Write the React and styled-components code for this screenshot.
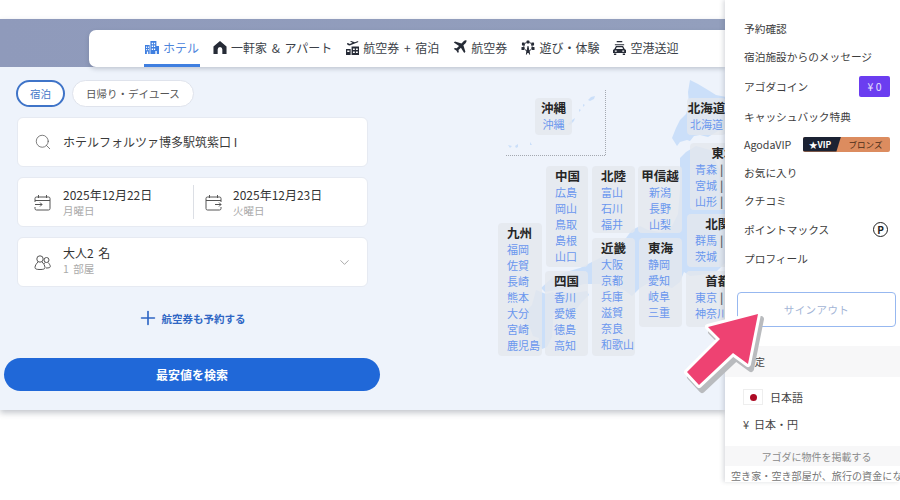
import styled, { createGlobalStyle } from "styled-components";
import { Search, ChevronDown, Plus } from "lucide-react";

const GlobalStyle = createGlobalStyle`
  html, body { margin: 0; padding: 0; background: #fff; }
  body { font-family: "Noto Sans CJK JP", "Noto Sans", sans-serif; }
  * { box-sizing: border-box; }
`;

const Page = styled.div`
  position: relative;
  width: 900px;
  height: 500px;
  overflow: hidden;
  display: flex;
  align-items: flex-start;
`;

const Main = styled.main`
  width: 725px;
  height: 391px;
  margin-top: 19px;
  background: #eef3fb;
  box-shadow: 0 3px 6px rgba(60, 70, 90, 0.3);
  display: flex;
  flex-direction: column;
`;

const Band = styled.div`
  height: 48px;
  padding: 11px 0 0 89px;
  background: linear-gradient(90deg, #8f9abb, #939fbd);
`;

const TabCard = styled.nav`
  height: 37px;
  padding-left: 55px;
  display: flex;
  gap: 12px;
  background: #fff;
  border-radius: 7px 0 0 7px;
  box-shadow: 0 2px 4px rgba(60, 70, 90, 0.25);
`;

const Tab = styled.div`
  height: 37px;
  padding: 0 1px;
  display: flex;
  align-items: center;
  gap: 4px;
  font-size: 12px;
  word-spacing: 2px;
  white-space: nowrap;
  color: ${(p) => (p.$active ? "#4f86dc" : "#3b3f48")};
  border-bottom: 3px solid ${(p) => (p.$active ? "#3f7fe0" : "transparent")};
  svg { flex: none; }
`;

const Content = styled.div`
  flex: 1;
  display: flex;
`;

const FormColumn = styled.div`
  width: 385px;
  padding: 13px 0 0 4px;
  display: flex;
  flex-direction: column;
`;

const PillRow = styled.div`
  margin-left: 12px;
  display: flex;
  gap: 7px;
`;

const Pill = styled.div`
  width: ${(p) => (p.$active ? 49 : 122)}px;
  height: 27px;
  display: flex;
  align-items: center;
  justify-content: center;
  font-size: 10.5px;
  border-radius: 14px;
  background: #fff;
  color: ${(p) => (p.$active ? "#4478c8" : "#555")};
  border: ${(p) => (p.$active ? "2px solid #3f74c8" : "1px solid #dfe3ec")};
`;

const Field = styled.div`
  width: 351px;
  height: 50px;
  margin: 10px 0 0 13px;
  display: flex;
  align-items: center;
  background: #fff;
  border: 1px solid #e6eaf2;
  border-radius: 6px;
  color: #444;
`;

const FieldIcon = styled.div`
  width: ${(p) => (p.$second ? 39 : 45)}px;
  padding-left: ${(p) => (p.$second ? 11 : 16)}px;
  display: flex;
  flex: none;
  color: #555;
`;

const DatePart = styled.div`
  flex: ${(p) => (p.$first ? "0 0 176px" : "1")};
  height: 34px;
  display: flex;
  align-items: center;
  border-right: ${(p) => (p.$first ? "1px solid #dcdfe5" : "none")};
`;

const SearchText = styled.div`
  padding-bottom: 2px;
  font-size: 12px;
  color: #3a3a3a;
`;

const Stack = styled.div`
  display: flex;
  flex-direction: column;
  flex: 1;
  padding-bottom: ${(p) => (p.$lift ? 3 : 0)}px;
  word-spacing: 2px;
`;

const MainLine = styled.div`
  font-size: 12px;
  line-height: 16px;
  color: #333;
`;

const SubLine = styled.div`
  font-size: 10.5px;
  line-height: 15px;
  color: #aaa;
`;

const Chevron = styled.div`
  width: 30px;
  display: flex;
  color: #777;
`;

const AddFlight = styled.div`
  margin-top: 20px;
  width: 374px;
  height: 22px;
  display: flex;
  justify-content: center;
  align-items: center;
  gap: 3px;
  font-size: 10.5px;
  font-weight: 700;
  color: #2f66c4;
`;

const SearchButton = styled.div`
  width: 376px;
  height: 33px;
  margin-top: 29px;
  display: flex;
  align-items: center;
  justify-content: center;
  border-radius: 17px;
  background: #2068d8;
  color: #fff;
  font-size: 12px;
  font-weight: 700;
`;

const MapCanvas = styled.div`
  position: relative;
  flex: 1;
  overflow: hidden;
`;

const MapShape = styled.svg`
  position: absolute;
  left: 0;
  top: 0;
`;

const Region = styled.div`
  position: absolute;
  left: ${(p) => p.$x - 385}px;
  top: ${(p) => p.$y - 67}px;
  width: ${(p) => p.$w}px;
  height: ${(p) => p.$h}px;
  padding: 2px 0 0 ${(p) => (p.$left ? 9 : 0)}px;
  text-align: ${(p) => (p.$left ? "left" : "center")};
  background: rgba(228, 231, 237, 0.8);
  border-radius: 4px;
  white-space: nowrap;
`;

const RegionTitle = styled.div`
  font-size: 12.5px;
  line-height: 16px;
  font-weight: 700;
  color: #262626;
`;

const RegionItem = styled.div`
  padding-left: ${(p) => p.$inset || 0}px;
  text-align: ${(p) => (p.$inset ? "left" : "inherit")};
  font-size: 11px;
  line-height: 16px;
  color: #6a97ee;
`;

const Pipe = styled.span`
  margin-left: 3px;
  color: #5d6068;
  font-weight: 700;
`;

const Drawer = styled.aside`
  position: relative;
  z-index: 2;
  width: 175px;
  height: 482px;
  padding-top: 14px;
  background: #fff;
  box-shadow: -2px 0 4px rgba(60, 70, 90, 0.18);
  overflow: hidden;
`;

const MenuRow = styled.div`
  height: ${(p) => p.$h || 28}px;
  padding: 0 10px 0 19px;
  display: flex;
  align-items: center;
  justify-content: space-between;
  font-size: 10.7px;
  color: #3d3d3d;
  white-space: nowrap;
`;

const CoinBadge = styled.div`
  width: 31px;
  height: 21px;
  display: flex;
  align-items: center;
  justify-content: center;
  background: #6b3df0;
  color: #e6e0ff;
  font-size: 10.5px;
  border-radius: 2px;
`;

const VipBadge = styled.div`
  width: 87px;
  height: 15px;
  display: flex;
  font-size: 8.5px;
  background: #dc8c5f;
  border-radius: 2px;
  overflow: hidden;
`;

const VipDark = styled.div`
  width: 38px;
  padding-left: 6px;
  display: flex;
  align-items: center;
  color: #fff;
  font-weight: 700;
  background: #1b2233;
  clip-path: polygon(0 0, 100% 0, 88% 100%, 0 100%);
`;

const VipLight = styled.div`
  flex: 1;
  display: flex;
  align-items: center;
  justify-content: center;
  color: #4a2c18;
`;

const PointBadge = styled.div`
  width: 15px;
  height: 15px;
  margin-right: 2px;
  display: flex;
  align-items: center;
  justify-content: center;
  border: 1.5px solid #222;
  border-radius: 50%;
  font-size: 10px;
  font-weight: 700;
  color: #222;
`;

const SignOut = styled.div`
  width: 159px;
  height: 35px;
  margin: 20px 0 0 12px;
  display: flex;
  align-items: center;
  justify-content: center;
  font-size: 10.5px;
  letter-spacing: 0.4px;
  color: #a3b5d6;
  background: #fff;
  border: 1px solid #97b8f0;
  border-radius: 4px;
`;

const SettingBand = styled.div`
  height: 31px;
  margin-top: 19px;
  padding-left: 19px;
  display: flex;
  align-items: center;
  font-size: 10.5px;
  color: #444;
  background: #f7f7f8;
`;

const LangRow = styled.div`
  height: 20px;
  margin-top: ${(p) => p.$mt}px;
  padding-left: 18px;
  display: flex;
  align-items: center;
  gap: ${(p) => p.$gap}px;
  font-size: 11px;
  color: #444;
`;

const Flag = styled.div`
  width: 20px;
  height: 16px;
  display: flex;
  align-items: center;
  justify-content: center;
  border: 1px solid #eee;
  &::after {
    content: "";
    width: 7px;
    height: 7px;
    border-radius: 50%;
    background: #ad0a24;
  }
`;

const ListBand = styled.div`
  height: 20px;
  margin-top: 12px;
  padding-left: 8px;
  display: flex;
  align-items: center;
  justify-content: center;
  font-size: 10px;
  color: #8a8a8a;
  background: #f7f7f8;
`;

const ListNote = styled.div`
  padding: 2px 0 0 6px;
  line-height: 16px;
  font-size: 10px;
  letter-spacing: 0.1px;
  color: #777;
  white-space: nowrap;
`;

const ArrowOverlay = styled.svg`
  position: absolute;
  z-index: 3;
  left: 670px;
  top: 300px;
`;

const HotelIcon = () => (
  <svg width="14" height="15" viewBox="0 0 15 15" fill="#3f7fe0" preserveAspectRatio="none">
    <path d="M0 5h5v9H3.400v-2.400H2V14H0zM1.200 6.600v1.300h1V6.600zm1.900 0v1.300h1V6.600zM1.200 8.900v1.300h1V8.900zm1.900 0v1.300h1V8.900z" fillRule="evenodd" />
    <path d="M5.800 1h6.400v5H15v8h-2.400v-3h-1.500v3H5.800zm1.400 1.700v1.500h1.400V2.700zm2.300 0v1.500h1.400V2.700zM7.200 5.600v1.500h1.400V5.600zm2.300 0v1.500h1.400V5.600zM7.200 8.500V10h1.400V8.500zm2.300 0V10h1.400V8.500z" fillRule="evenodd" />
  </svg>
);

const HomeIcon = () => (
  <svg width="14" height="15" viewBox="0 0 15 15" fill="#262b36" preserveAspectRatio="none">
    <path d="M7.500 1 14.500 6.600V14H10V9.500a2.500 2.500 0 0 0-5 0V14H.5V6.600z" />
  </svg>
);

const PlaneHotelIcon = () => (
  <svg width="13" height="15" viewBox="0 0 14 15" fill="#262b36" preserveAspectRatio="none">
    <path d="M1 3.400 2 3l2.200 1L7 2.800 4.400 1.400 5.400 1l4.200 1.200 2.600-1c.8-.3 1.600.4.6 1L4 5.600 1.800 5z" />
    <path d="M0 9h5v6H0zM6 6.500h8V15H6zM1.300 10.500v1.400h2.400v-1.400zM7.500 8.500v1.500h2V8.500zM10.700 8.500v1.500h2V8.500zM7.500 11.500V13h2v-1.500zM10.700 11.500V13h2v-1.500z" fillRule="evenodd" />
  </svg>
);

const PlaneIcon = () => (
  <svg width="14" height="14" viewBox="0 0 14 14" fill="#262b36">
    <path d="M13.600.6c-.7-.7-2-.3-3 .7L8.500 3.400 2 1.400.8 2.600l5.200 3.300-2.300 2.400-1.900-.3-.9.900 2.400 1.600 1.600 2.400.9-.9-.3-1.900 2.400-2.300 3.300 5.200 1.200-1.200-2-6.500 2.100-2.100c1-1 1.400-2.300.7-3z" />
  </svg>
);

const WheelIcon = () => (
  <svg width="14" height="15" viewBox="0 0 15 15" fill="#262b36" preserveAspectRatio="none">
    <path d="M7 6h1l1.800 8.500H8.600L7.500 9.500 6.400 14.500H5.200z" />
    <rect x="6" y="0.500" width="3" height="3" rx="0.600" />
    <rect x="6" y="10" width="3" height="3" rx="0.600" />
    <rect x="1" y="2.500" width="3" height="3" rx="0.600" />
    <rect x="11" y="2.500" width="3" height="3" rx="0.600" />
    <rect x="0.500" y="7" width="3" height="3" rx="0.600" />
    <rect x="11.500" y="7" width="3" height="3" rx="0.600" />
    <circle cx="7.500" cy="6.500" r="4.500" fill="none" stroke="#262b36" strokeWidth="0.900" />
  </svg>
);

const CarIcon = () => (
  <svg width="13" height="15" viewBox="0 0 14 15" fill="#262b36" preserveAspectRatio="none">
    <path d="M4 1h6v1.200H4zM2 4.200h10V5.300H2z" />
    <path d="M3.200 6h7.600L12.500 9 14 10v3H0v-3l1.500-1zM4 7.200 3.200 9h7.600L10 7.200zM2 10.500v1.200h2v-1.200zm8 0v1.200h2v-1.200z" fillRule="evenodd" />
    <path d="M1 13.500h2.500V15H1zM10.500 13.500H13V15h-2.500z" />
  </svg>
);

const CheckInIcon = () => (
  <svg width="17" height="17" viewBox="0 0 17 17" fill="none" stroke="#555" strokeWidth="1">
    <path d="M1 8V4.500a1.500 1.500 0 0 1 1.500-1.500h12A1.500 1.500 0 0 1 16 4.500v10a1.500 1.500 0 0 1-1.500 1.500h-12A1.500 1.500 0 0 1 1 14.500V13" />
    <path d="M4.500 1v3M12.500 1v3M1 6.500h15M1 10.500h7M6 8.500l2 2-2 2" />
  </svg>
);

const CheckOutIcon = () => (
  <svg width="17" height="17" viewBox="0 0 17 17" fill="none" stroke="#555" strokeWidth="1">
    <path d="M16 8V4.500A1.500 1.500 0 0 0 14.500 3h-12A1.500 1.500 0 0 0 1 4.500v10A1.500 1.500 0 0 0 2.500 16h12a1.500 1.500 0 0 0 1.500-1.500V13" />
    <path d="M4.500 1v3M12.500 1v3M1 6.500h15M10 10.500h6M14 8.500l2 2-2 2" />
  </svg>
);

const GuestsIcon = () => (
  <svg width="17" height="17" viewBox="0 0 17 17" fill="none" stroke="#555" strokeWidth="1">
    <circle cx="6" cy="5" r="3.200" />
    <circle cx="12.500" cy="6" r="2.500" />
    <path d="M4 8C2.500 9.500 1 11.500 1 13.500c0 1.500 1.500 2 5 2s5-.5 5-2c0-2-1.500-4-3-5.500" />
    <path d="M11 8.500c-.5.5-.8 1-1 1.500M14 8.500c1 1 2.300 2.500 2.300 4 0 1-1 1.500-4.300 1.500" />
  </svg>
);

const tabs = [
  { label: "ホテル", icon: <HotelIcon />, active: true },
  { label: "一軒家 & アパート", icon: <HomeIcon /> },
  { label: "航空券 + 宿泊", icon: <PlaneHotelIcon /> },
  { label: "航空券", icon: <PlaneIcon /> },
  { label: "遊び・体験", icon: <WheelIcon /> },
  { label: "空港送迎", icon: <CarIcon /> },
];

// coordinates are page pixels, the drawer covers what runs past x=725
const regions = [
  { title: "沖縄", x: 535, y: 98, w: 37, h: 37, items: ["沖縄"] },
  { title: "北海道", x: 687, y: 98, w: 39, h: 37, items: ["北海道"] },
  { title: "東北", x: 690, y: 143, w: 68, h: 67, inset: 5, items: ["青森|", "宮城|", "山形|"] },
  { title: "中国", x: 546, y: 166, w: 42, h: 101, left: true, items: ["広島", "岡山", "鳥取", "島根", "山口"] },
  { title: "北陸", x: 592, y: 166, w: 43, h: 67, left: true, items: ["富山", "石川", "福井"] },
  { title: "甲信越", x: 638, y: 166, w: 44, h: 67, items: ["新潟", "長野", "山梨"] },
  { title: "北関東", x: 687, y: 214, w: 74, h: 53, inset: 8, items: ["群馬|", "茨城"] },
  { title: "九州", x: 498, y: 223, w: 44, h: 133, left: true, items: ["福岡", "佐賀", "長崎", "熊本", "大分", "宮崎", "鹿児島"] },
  { title: "近畿", x: 592, y: 238, w: 43, h: 118, left: true, items: ["大阪", "京都", "兵庫", "滋賀", "奈良", "和歌山"] },
  { title: "東海", x: 639, y: 238, w: 43, h: 89, left: true, items: ["静岡", "愛知", "岐阜", "三重"] },
  { title: "四国", x: 545, y: 271, w: 43, h: 85, left: true, items: ["香川", "愛媛", "徳島", "高知"] },
  { title: "首都圏", x: 686, y: 271, w: 76, h: 56, inset: 9, items: ["東京|", "神奈川"] },
];

const japan = [
  "M690 80L698 84 708 90 716 95 726 97V128L718 131 708 137 700 135 694 136 690 141 687 140 680 142 677 146 672 138 676 128 680 120 686 114 689 104 688 92Z",
  "M680 158L686 152 696 146 710 150 720 170 726 190V262L716 272 700 275 690 276 684 272 680 282 672 288 660 284 650 282 640 288 632 296 624 290 612 286 600 284 584 284 570 288 556 290 545 292 541 288 552 278 566 272 580 268 592 262 604 256 616 246 626 238 632 230 640 226 648 230 660 232 672 226 678 214 680 190Z",
  "M553 295L562 292 574 293 587 291 589 295 581 303 575 311 572 316 567 310 559 310 551 314Z",
  "M536 290L546 294 553 292 556 297 554 307 553 321 552 337 547 347 542 349 538 344 539 338 533 336 530 328 524 322 523 314 528 309 532 305Z",
  "M588 100L591 97 595 96 594 99 590 101ZM583 104L585 105 583 107ZM579 109L581 110 579 112ZM568 124L572 120 575 118 574 121 570 125Z",
  "M530 142L532 145 530 145ZM508 145L512 146 510 148ZM515 146L518 144 518 147 516 148Z",
];

const arrowPath = "M758 314 708 327 720 339 687 372 699 385 733 353 748 364z";

function App() {
  return (
    <Page>
      <GlobalStyle />
      <Main>
        <Band>
          <TabCard>
            {tabs.map((tab) => (
              <Tab key={tab.label} $active={tab.active}>
                {tab.icon}
                {tab.label}
              </Tab>
            ))}
          </TabCard>
        </Band>
        <Content>
          <FormColumn>
            <PillRow>
              <Pill $active>宿泊</Pill>
              <Pill>日帰り・デイユース</Pill>
            </PillRow>
            <Field>
              <FieldIcon>
                <Search size={18} strokeWidth={1} />
              </FieldIcon>
              <SearchText>ホテルフォルツァ博多駅筑紫口 I</SearchText>
            </Field>
            <Field>
              <DatePart $first>
                <FieldIcon>
                  <CheckInIcon />
                </FieldIcon>
                <Stack>
                  <MainLine>2025年12月22日</MainLine>
                  <SubLine>月曜日</SubLine>
                </Stack>
              </DatePart>
              <DatePart>
                <FieldIcon $second>
                  <CheckOutIcon />
                </FieldIcon>
                <Stack>
                  <MainLine>2025年12月23日</MainLine>
                  <SubLine>火曜日</SubLine>
                </Stack>
              </DatePart>
            </Field>
            <Field>
              <FieldIcon>
                <GuestsIcon />
              </FieldIcon>
              <Stack $lift>
                <MainLine>大人2 名</MainLine>
                <SubLine>1 部屋</SubLine>
              </Stack>
              <Chevron>
                <ChevronDown size={15} strokeWidth={1} />
              </Chevron>
            </Field>
            <AddFlight>
              <Plus size={22} strokeWidth={1.8} />
              航空券も予約する
            </AddFlight>
            <SearchButton>最安値を検索</SearchButton>
          </FormColumn>
          <MapCanvas>
            <MapShape width="340" height="343" viewBox="385 67 340 343">
              {japan.map((d) => (
                <path key={d} d={d} fill="#cbdff9" />
              ))}
              <path d="M605.500 90V155.500H505" fill="none" stroke="#a4a8b0" strokeWidth="1" strokeDasharray="1 1" />
            </MapShape>
            {regions.map((r) => (
              <Region key={r.title} $x={r.x} $y={r.y} $w={r.w} $h={r.h} $left={r.left}>
                <RegionTitle>{r.title}</RegionTitle>
                {r.items.map((item) => (
                  <RegionItem key={item} $inset={r.inset}>
                    {item.replace("|", "")}
                    {item.endsWith("|") && <Pipe>|</Pipe>}
                  </RegionItem>
                ))}
              </Region>
            ))}
          </MapCanvas>
        </Content>
      </Main>
      <Drawer>
        <MenuRow>予約確認</MenuRow>
        <MenuRow>宿泊施設からのメッセージ</MenuRow>
        <MenuRow $h={32}>
          アゴダコイン
          <CoinBadge>¥ 0</CoinBadge>
        </MenuRow>
        <MenuRow>キャッシュバック特典</MenuRow>
        <MenuRow>
          AgodaVIP
          <VipBadge>
            <VipDark>★VIP</VipDark>
            <VipLight>ブロンズ</VipLight>
          </VipBadge>
        </MenuRow>
        <MenuRow>お気に入り</MenuRow>
        <MenuRow>クチコミ</MenuRow>
        <MenuRow $h={30}>
          ポイントマックス
          <PointBadge>P</PointBadge>
        </MenuRow>
        <MenuRow>プロフィール</MenuRow>
        <SignOut>サインアウト</SignOut>
        <SettingBand>設定</SettingBand>
        <LangRow $mt={10} $gap={7}>
          <Flag />
          日本語
        </LangRow>
        <LangRow $mt={7} $gap={5}>
          <span>¥</span>
          日本・円
        </LangRow>
        <ListBand>アゴダに物件を掲載する</ListBand>
        <ListNote>空き家・空き部屋が、旅行の資金になります</ListNote>
      </Drawer>
      <ArrowOverlay width="100" height="100" viewBox="670 300 100 100">
        <path d={arrowPath} transform="translate(3 5)" fill="#b9bbbe" stroke="#b9bbbe" strokeWidth="6" strokeLinejoin="round" />
        <path d={arrowPath} fill="#fff" stroke="#fff" strokeWidth="6" strokeLinejoin="round" />
        <path d={arrowPath} fill="#ee4272" />
      </ArrowOverlay>
    </Page>
  );
}

export default App;
